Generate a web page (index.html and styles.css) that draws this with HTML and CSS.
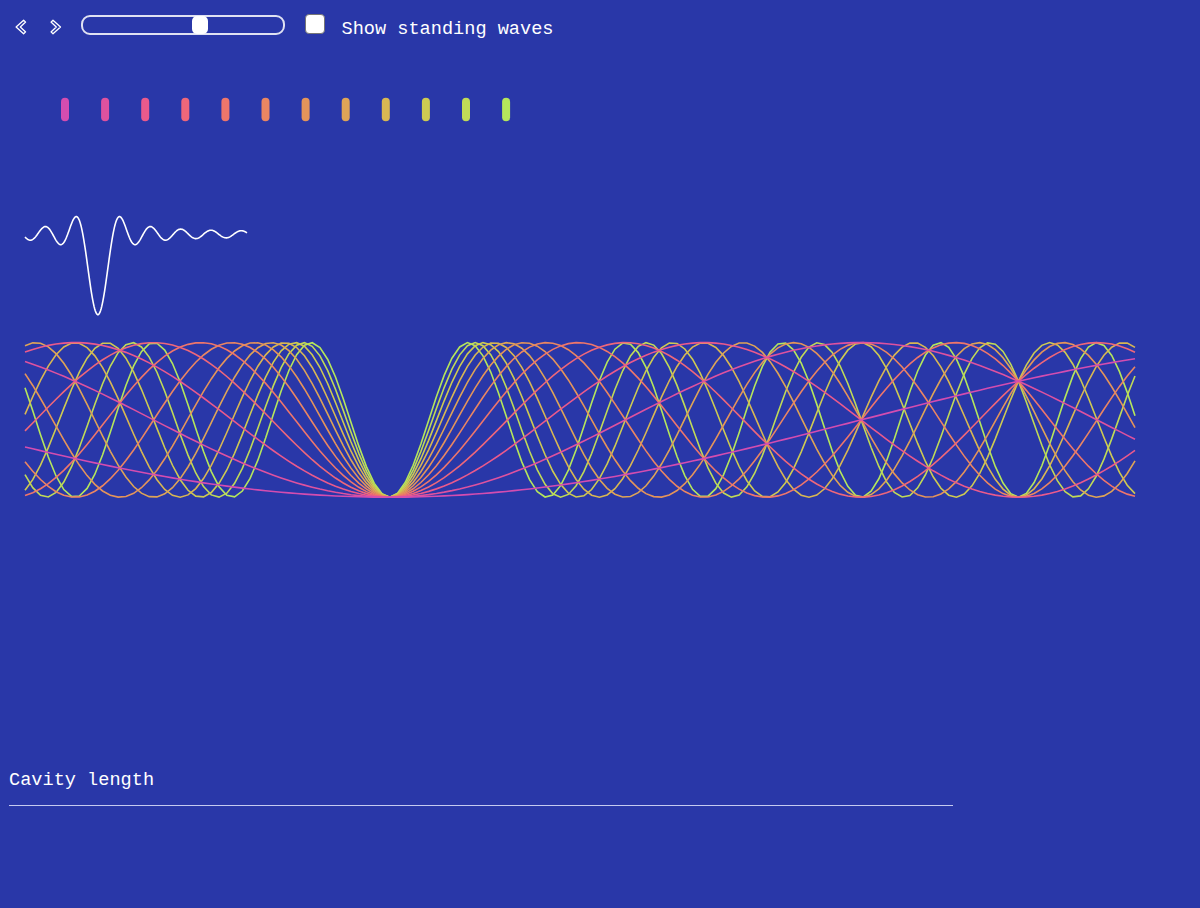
FILE: index.html
```html
<!DOCTYPE html>
<html lang="en">
<head>
    <meta charset="UTF-8">
    <meta name="viewport" content="width=device-width, initial-scale=1.0">
    <title>Standing waves</title>
    <link rel="stylesheet" href="styles.css">
</head>
<body>
    <div class="controls">
        <button class="step" id="prev" aria-label="Previous">
            <svg width="12" height="16" viewBox="0 0 12 16">
                <path d="M8.6 1.2 L1.1 8 L8.6 14.8 L10.6 12.9 L5.3 8 L10.6 3.1 Z"/>
            </svg>
        </button>
        <button class="step" id="next" aria-label="Next">
            <svg width="12" height="16" viewBox="0 0 12 16">
                <path d="M3 1.2 L10.5 8 L3 14.8 L1 12.9 L6.3 8 L1 3.1 Z"/>
            </svg>
        </button>
        <input type="range" class="slider" id="position" min="0" max="1000" value="591">
        <input type="checkbox" class="toggle" id="standing">
        <label for="standing">Show standing waves</label>
    </div>

    <svg class="chart" width="1200" height="718" id="chart">
        <g id="modes"></g>
        <path id="sum" class="sum"/>
        <g id="waves"></g>
    </svg>

    <div class="cavity">
        <p>Cavity length</p>
        <div class="cavity-line"></div>
    </div>

    <script src="waves.js"></script>
</body>
</html>
```
FILE: styles.css
```css
body {
    margin: 0;
    height: 908px;
    overflow: hidden;
    background-color: #2937a8;
    color: white;
    font-family: "Courier New", "Liberation Mono", monospace;
    font-size: 18.6px;
}
.controls {
    display: flex;
    align-items: flex-start;
    height: 50px;
    box-sizing: border-box;
    padding: 14px 0 0 15px;
}
.step {
    display: block;
    width: 12px;
    height: 16px;
    margin: 5px 23px 0 0;
    padding: 0;
    border: none;
    background: none;
    cursor: pointer;
}
.step svg {
    display: block;
}
.step path {
    fill: none;
    stroke: white;
    stroke-width: 1.3;
    stroke-linejoin: round;
}
.slider {
    appearance: none;
    box-sizing: border-box;
    width: 204px;
    height: 20px;
    margin: 1px 20px 0 -4px;
    border: 2px solid rgba(255, 255, 255, 0.85);
    border-radius: 9px;
    background: none;
}
.slider::-webkit-slider-thumb {
    appearance: none;
    width: 16px;
    height: 18px;
    border-radius: 5px;
    background: white;
}
.toggle {
    appearance: none;
    box-sizing: border-box;
    width: 20px;
    height: 20px;
    margin: 0 16.5px 0 0;
    border: 1.5px solid #767676;
    border-radius: 4px;
    background: white;
}
.controls label {
    margin-top: 5px;
    line-height: 21px;
}
.chart {
    display: block;
}
#modes line {
    stroke-width: 8;
    stroke-linecap: round;
}
.sum, #waves path {
    fill: none;
    stroke-width: 1.6;
}
.sum {
    stroke: white;
}
.cavity {
    width: 944px;
    margin-left: 9px;
}
.cavity p {
    margin: 0;
    padding: 2px 0 14px;
    line-height: 21px;
}
.cavity-line {
    height: 1px;
    background-color: #c5caf0;
}
```
FILE: waves.js
```javascript
const NS = "http://www.w3.org/2000/svg";
const colors = ["#d44db0", "#de529f", "#ea5a8c", "#ee677a", "#ee766b", "#ea8662",
                "#e4945a", "#dea457", "#d8b753", "#ceca52", "#c0da57", "#b5e65c"];

const cavity = 943.4;
const left = 25;
const width = 1110;
const center = 389.5 - left;
const amp = 77.3;
const steps = 143;

// Value of the n-th mode at distance x from the left edge
function mode(n, x) {
    return Math.cos(n * Math.PI * (x - center) / cavity);
}

function add(parent, name, attrs) {
    const el = document.createElementNS(NS, name);
    for (const key in attrs) el.setAttribute(key, attrs[key]);
    document.getElementById(parent).appendChild(el);
}

// Markers
colors.forEach((color, i) => {
    const x = 65 + i * 40.1;
    add("modes", "line", { x1: x, y1: 51.8, x2: x, y2: 67.2, stroke: color });
});

// Single waves, the fundamental goes on top
for (let n = colors.length; n >= 1; n--) {
    const points = [];
    for (let k = 0; k <= steps; k++) {
        const x = k * width / steps;
        points.push((left + x).toFixed(2) + "," + (369.9 + amp * mode(n, x)).toFixed(2));
    }
    add("waves", "path", { d: "M" + points.join("L"), stroke: colors[n - 1] });
}

// Sum of all waves, drawn at a fifth of the width
const sum = [];
for (let x = 0; x <= width; x += 3) {
    let y = 0;
    colors.forEach((c, i) => y += mode(i + 1, x));
    sum.push((left + x / 5).toFixed(2) + "," + (187.4 + amp * y / colors.length).toFixed(2));
}
document.getElementById("sum").setAttribute("d", "M" + sum.join("L"));
```
